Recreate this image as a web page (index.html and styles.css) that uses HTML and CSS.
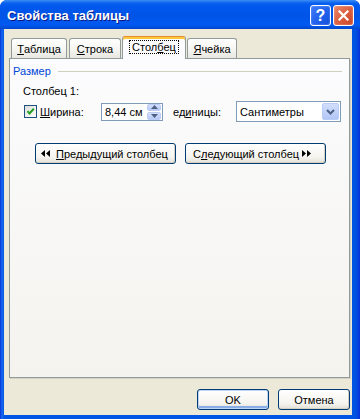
FILE: index.html
```html
<!DOCTYPE html>
<html lang="ru">
<head>
	<meta charset="UTF-8">
	<title>Свойства таблицы</title>
	<link rel="stylesheet" href="styles.css">
</head>
<body>
	<div class="window">
		<div class="titlebar">
			<span class="title">Свойства таблицы</span>
			<div class="caption-btns">
				<span class="cbtn help">?</span>
				<span class="cbtn close">
					<svg width="11" height="11" viewBox="0 0 11 11"><path d="M1.5 1.5L9.5 9.5M9.5 1.5L1.5 9.5" stroke="#fff" stroke-width="2.2" stroke-linecap="square"/></svg>
				</span>
			</div>
		</div>
		<div class="client">
			<div class="tabs">
				<span class="tab t1"><u>Т</u>аблица</span>
				<span class="tab t2"><u>С</u>трока</span>
				<span class="tab t3 active"><span class="focus">Стол<u>б</u>ец</span></span>
				<span class="tab t4"><u>Я</u>чейка</span>
			</div>
			<div class="panel">
				<div class="group-head"><span>Размер</span><i class="rule"></i></div>
				<div class="group">
					<div class="caption">Столбец 1:</div>
					<div class="fields">
						<label class="check">
							<span class="box"><svg width="11" height="11" viewBox="0 0 11 11"><path d="M2.5 5.2L4.5 7.4L8.8 2.8" fill="none" stroke="#21A121" stroke-width="2"/></svg></span>
							<span><u>Ш</u>ирина:</span>
						</label>
						<div class="spin">
							<span class="spin-val">8,44 см</span>
							<span class="spin-btns">
								<b><svg width="7" height="4" viewBox="0 0 7 4"><path d="M0 4L3.5 0L7 4Z" fill="#4D6185"/></svg></b>
								<b><svg width="7" height="4" viewBox="0 0 7 4"><path d="M0 0L3.5 4L7 0Z" fill="#4D6185"/></svg></b>
							</span>
						</div>
						<span class="units">ед<u>и</u>ницы:</span>
						<div class="select">
							<span class="select-val">Сантиметры</span>
							<span class="drop"><svg width="9" height="6" viewBox="0 0 9 6"><path d="M1 1L4.5 4.5L8 1" fill="none" stroke="#4D6185" stroke-width="2"/></svg></span>
						</div>
					</div>
					<div class="nav">
						<button class="btn wide prev"><svg width="9" height="7" viewBox="0 0 9 7"><path d="M4 0L0 3.5L4 7ZM9 0L5 3.5L9 7Z" fill="#000"/></svg><span><u>П</u>редыдущий столбец</span></button>
						<button class="btn wide next"><span>С<u>л</u>едующий столбец</span><svg width="9" height="7" viewBox="0 0 9 7"><path d="M0 0L4 3.5L0 7ZM5 0L9 3.5L5 7Z" fill="#000"/></svg></button>
					</div>
				</div>
			</div>
			<div class="footer">
				<button class="btn small default">OK</button>
				<button class="btn small">Отмена</button>
			</div>
		</div>
	</div>
</body>
</html>
```

FILE: styles.css
```css
*{box-sizing:border-box;}
body{margin:0;font:11px "Liberation Sans",Tahoma,Arial,sans-serif;color:#000;}
u{text-decoration:underline;text-underline-offset:1px;}

.window{width:360px;height:419px;display:flex;flex-direction:column;background:linear-gradient(90deg,#0831D9 0,#166AEE 2px,#0055E5 4px,#0055E5 352px,#0050E0 356px,#0831D9 360px);border-radius:7px 7px 0 0;overflow:hidden;}
.titlebar{height:29px;flex:none;display:flex;align-items:center;justify-content:space-between;padding:0 6px 0 7px;background:linear-gradient(#3D8FF5 0,#0B62EE 3px,#0058EE 6px,#0054E6 55%,#005AF2 85%,#0048CC 100%);}
.title{color:#fff;font:bold 13px "Liberation Sans",Arial,sans-serif;text-shadow:1px 1px #0A1883;margin-top:1px;}
.caption-btns{display:flex;gap:2px;margin-top:2px;}
.cbtn{width:21px;height:21px;border:1px solid #fff;border-radius:3px;display:flex;align-items:center;justify-content:center;}
.help{background:linear-gradient(135deg,#3E7CF8,#1E5EEA 60%,#1450D8);color:#fff;font:bold 16px "Liberation Sans",Arial,sans-serif;box-shadow:inset 0 0 2px #86A8F8;}
.close{background:linear-gradient(135deg,#E9876A,#D85A3A 60%,#C8452A);box-shadow:inset 0 0 2px #F2B09C;}

.client{flex:1;margin:0 8px 4px 4px;background:#ECE9D8;display:flex;flex-direction:column;padding:7px 2px 5px 5px;}

.tabs{display:flex;align-items:flex-end;height:22px;padding-left:2px;position:relative;z-index:1;}
.tab{height:20px;margin-right:1px;border:1px solid #919B9C;border-bottom:none;border-radius:3px 3px 0 0;background:linear-gradient(#FFFFFF,#F4F4F0 60%,#E8E7E0);display:flex;align-items:center;justify-content:center;padding-top:1px;}
.t1{width:56px;margin-right:2px;}
.t2{width:52px;}
.t3{width:64px;}
.t4{width:50px;}
.tab.active{height:23px;margin-bottom:-1px;background:#FCFCFE;border-top:1px solid #E68B2C;box-shadow:inset 0 2px #FFC73C;padding-top:2px;align-items:flex-start;}
.focus{border:1px dotted #000;padding:0 2px;line-height:12px;margin-top:1px;}

.panel{flex:1;border:1px solid #919B9C;background:linear-gradient(#FCFCFE,#F4F3EE);padding:6px 0 0 3px;box-shadow:1px 1px 0 #D5D2C2;}
.group-head{display:flex;align-items:center;line-height:13px;color:#0046D5;}
.rule{flex:1;height:1px;background:#D0D0BF;margin:0 7px 0 7px;}
.group{margin-left:10px;}
.caption{margin-top:7px;line-height:13px;}
.fields{margin-top:3px;height:21px;display:flex;align-items:center;}
.check{width:78px;display:flex;align-items:center;gap:3px;padding-left:1px;}
.box{width:13px;height:13px;border:1px solid #1C5180;background:linear-gradient(135deg,#DCDCD7,#FFFFFF);display:flex;align-items:center;justify-content:center;}
.spin{width:62px;height:18px;border:1px solid #7F9DB9;background:#fff;display:flex;}
.spin-val{flex:1;padding-left:3px;line-height:16px;}
.spin-btns{width:15px;display:flex;flex-direction:column;gap:1px;padding:0 1px 0 0;}
.spin-btns b{flex:1;background:linear-gradient(#D3DEFC,#B7CAF5);border:1px solid #BCCDF5;border-radius:2px;display:flex;align-items:center;justify-content:center;}
.units{width:63px;margin-left:10px;}
.select{width:105px;height:21px;border:1px solid #7F9DB9;background:#fff;display:flex;align-items:center;padding:1px;}
.select-val{flex:1;padding-left:2px;}
.drop{width:17px;height:17px;border-radius:2px;background:linear-gradient(#D2DEFC,#B2C6F6);border:1px solid #B9CCF8;display:flex;align-items:center;justify-content:center;}

.btn{height:21px;border:1px solid #003C74;border-radius:3px;background:linear-gradient(#FFFFFF,#F5F4EF 70%,#E3E0D6);box-shadow:inset -1px -1px 0 #D6D0C5;font:11px "Liberation Sans",Tahoma,Arial,sans-serif;color:#000;padding:0;display:flex;align-items:center;justify-content:center;}
.nav{margin-top:21px;margin-left:12px;display:flex;gap:9px;}
.wide{width:141px;justify-content:flex-start;gap:6px;}
.prev{padding-left:5px;}
.next{padding-left:7px;gap:3px;}
.footer{padding-top:11px;display:flex;justify-content:flex-end;gap:9px;}
.small{width:72px;}
.default{box-shadow:inset 0 0 0 1px #BCD4F6,inset 0 -2px 0 1px #89ADE4;}
```
